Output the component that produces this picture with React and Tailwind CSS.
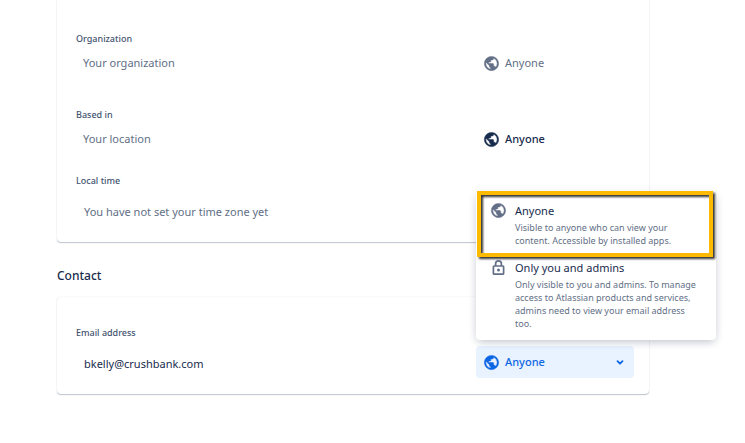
import React, { useState } from 'react';

const GlobeIcon = ({ className }) => (
  <svg viewBox="0 0 24 24" className={className} fill="currentColor" stroke="currentColor" strokeWidth="0.7">
    <path d="M12 2C6.48 2 2 6.48 2 12s4.48 10 10 10 10-4.48 10-10S17.52 2 12 2zm-1 17.93c-3.95-.49-7-3.85-7-7.93 0-.62.08-1.21.21-1.79L9 15v1c0 1.1.9 2 2 2v1.93zm6.9-2.54c-.26-.81-1-1.39-1.9-1.39h-1v-3c0-.55-.45-1-1-1H8v-2h2c.55 0 1-.45 1-1V7h2c1.100 0 2-.9 2-2v-.41c2.930 1.190 5 4.060 5 7.410 0 2.080-.8 3.970-2.100 5.390z" />
  </svg>
);

const LockIcon = ({ className }) => (
  <svg viewBox="0 0 17 17" className={className} fill="none" stroke="currentColor" strokeWidth="1.7" strokeLinejoin="round">
    <rect x="3.4" y="7" width="10.2" height="8.2" rx="0.8" />
    <path d="M5.6 7V4.8a2.9 2.9 0 0 1 5.8 0V7" />
    <circle cx="8.5" cy="11.1" r="1.5" fill="currentColor" stroke="none" />
  </svg>
);

const OPTIONS = [
  {
    id: 'anyone',
    title: 'Anyone',
    icon: GlobeIcon,
    description: 'Visible to anyone who can view your content. Accessible by installed apps.',
    highlighted: true,
  },
  {
    id: 'admins',
    title: 'Only you and admins',
    icon: LockIcon,
    description:
      'Only visible to you and admins. To manage access to Atlassian products and services, admins need to view your email address too.',
    highlighted: false,
  },
];

const Card = ({ className, children }) => (
  <section
    className={`bg-white rounded pl-[19px] pr-[15px] shadow-[0_1px_1px_rgba(9,30,66,0.25),0_0_1px_rgba(9,30,66,0.2)] ${className}`}
  >
    {children}
  </section>
);

const labelClass = 'block h-4 text-[9px] leading-4 font-medium text-[#44546f]';

const Visibility = ({ className, disabled }) => (
  <button
    type="button"
    disabled={disabled}
    className={`flex items-center w-[158px] h-8 shrink-0 px-[7px] rounded text-[11px] leading-4 ${className}`}
  >
    <GlobeIcon className="size-[17px] mr-[5px]" />
    Anyone
  </button>
);

const VisibilityMenu = () => (
  <div
    role="menu"
    className="absolute z-10 right-[-82px] bottom-[38px] flex flex-col gap-px w-60 py-1 bg-white rounded shadow-[0_4px_8px_-2px_rgba(9,30,66,0.2),0_0_10px_rgba(9,30,66,0.1)]"
  >
    {OPTIONS.map(({ id, title, icon: Icon, description, highlighted }) => (
      <button
        key={id}
        type="button"
        role="menuitem"
        className="relative flex items-start w-full pl-3.5 pr-4 py-1.5 text-left"
      >
        <Icon className="size-[17px] -mt-px mr-2 shrink-0 text-[#626f86]" />
        <span className="block">
          <span className="block text-[11px] leading-4 text-[#172b4d]">{title}</span>
          <span className="block mt-0.5 text-[9px] leading-[13px] text-[#626f86]">{description}</span>
        </span>
        {highlighted && (
          <span className="absolute left-px right-[3px] -top-1.5 -bottom-1 border-4 border-[#fcbb00] drop-shadow-[2px_2px_1px_rgba(0,0,0,0.8)]" />
        )}
      </button>
    ))}
  </div>
);

const App = () => {
  const [open, setOpen] = useState(true);

  return (
    <main className="min-h-screen overflow-hidden bg-white pl-[57px] pr-24 font-['Noto_Sans',sans-serif] text-[#172b4d]">
      <Card className="pt-[31px] pb-3.5 rounded-t-none">
        <div>
          <label htmlFor="organization" className={labelClass}>Organization</label>
          <div className="flex items-center">
            <input
              id="organization"
              placeholder="Your organization"
              className="flex-1 min-w-0 h-8 px-[7px] pb-0.5 text-[11px] placeholder:text-[#626f86] outline-none"
            />
            <Visibility disabled className="text-[#626f86]" />
          </div>
        </div>
        <div className="mt-7">
          <label htmlFor="location" className={labelClass}>Based in</label>
          <div className="flex items-center">
            <input
              id="location"
              placeholder="Your location"
              className="flex-1 min-w-0 h-8 px-[7px] pb-0.5 text-[11px] placeholder:text-[#626f86] outline-none"
            />
            <Visibility className="font-medium text-[#172b4d]" />
          </div>
        </div>
        <div className="mt-[18px]">
          <h3 className={labelClass}>Local time</h3>
          <p className="mt-[7px] px-2 h-8 text-[11px] leading-8 text-[#626f86]">
            You have not set your time zone yet
          </p>
        </div>
      </Card>

      <h2 className="mt-6 text-[12px] leading-5 font-medium">Contact</h2>

      <Card className="mt-[11px] pt-7 pb-4">
        <h3 className={labelClass}>Email address</h3>
        <div className="flex items-center mt-[5px]">
          <p className="flex-1 min-w-0 px-2 pt-1 text-[11px] leading-4">bkelly@crushbank.com</p>
          <div className="relative">
            <button
              type="button"
              aria-haspopup="menu"
              aria-expanded={open}
              onClick={() => setOpen(!open)}
              className="flex items-center w-[158px] h-8 px-[7px] rounded bg-[#e9f2ff] text-[11px] leading-4 font-medium text-[#0c66e4]"
            >
              <GlobeIcon className="size-[17px] mr-[5px]" />
              Anyone
              <svg viewBox="0 0 8 8" className="size-2 ml-auto mr-[3px]" fill="none" stroke="currentColor" strokeWidth="1.8" strokeLinecap="round" strokeLinejoin="round">
                <path d="M1.5 3.2 4 5.7l2.5-2.5" />
              </svg>
            </button>
            {open && <VisibilityMenu />}
          </div>
        </div>
      </Card>
    </main>
  );
};

export default App;
